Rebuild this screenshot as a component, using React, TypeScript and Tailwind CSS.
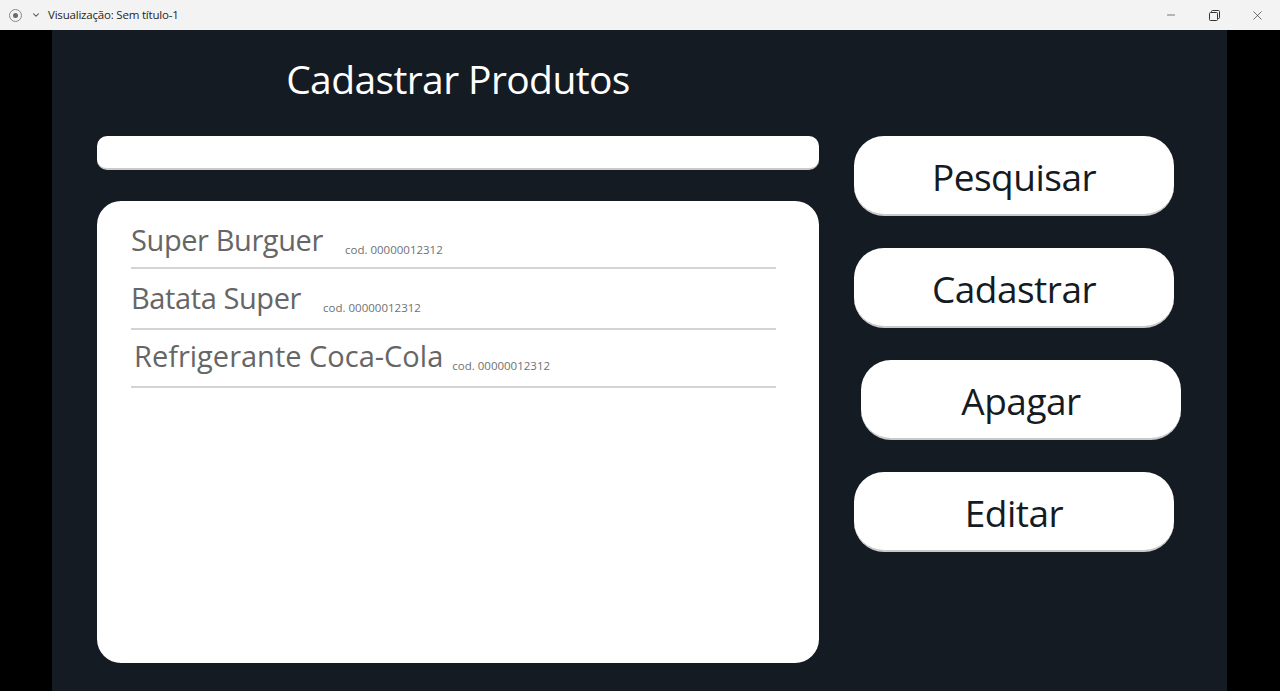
import { Minus, X, ChevronDown } from 'lucide-react';

const produtos = [
  { nome: 'Super Burguer', codigo: '00000012312', box: 'pt-[23px] pb-[11px]', nomeCls: '', gap: 'ml-[22px]' },
  { nome: 'Batata Super', codigo: '00000012312', box: 'pt-[13px] pb-[14px]', nomeCls: '', gap: 'ml-[22px]' },
  { nome: 'Refrigerante Coca-Cola', codigo: '00000012312', box: 'pt-[10px] pb-[14px] pl-[3px]', nomeCls: 'tracking-[0px]', gap: 'ml-[9px]' },
];

const botoes = [
  { label: 'Pesquisar', offset: '' },
  { label: 'Cadastrar', offset: '' },
  { label: 'Apagar', offset: 'translate-x-[7px]' },
  { label: 'Editar', offset: '' },
];

export default function App() {
  return (
    <div className="w-[1280px] h-[691px] flex flex-col overflow-hidden bg-black font-['Open_Sans',sans-serif]">
      {/* Title bar */}
      <div className="h-[30px] shrink-0 bg-[#f3f3f3] flex items-center">
        <div className="ml-[9px] w-[13px] h-[13px] rounded-full border border-[#8a8a8a] flex items-center justify-center">
          <div className="w-[5px] h-[5px] rounded-full bg-[#6a6a6a]" />
        </div>
        <ChevronDown className="ml-[9px] w-[10px] h-[10px] text-[#444]" strokeWidth={2.5} />
        <span className="ml-[7px] text-[11.5px] tracking-[-0.2px] text-[#1f1f1f]">Visualização: Sem título-1</span>
        <div className="ml-auto flex items-center h-full">
          <div className="w-[46px] h-full flex items-center justify-center">
            <Minus className="w-[12px] h-[12px] text-[#333]" strokeWidth={1.3} />
          </div>
          <div className="w-[40px] h-full flex items-center justify-center">
            <svg width="11" height="11" viewBox="0 0 11 11" fill="none" stroke="#333" strokeWidth="1">
              <rect x="0.5" y="2.5" width="8" height="8" rx="1" />
              <path d="M2.5 2.5V1.5a1 1 0 0 1 1-1h6a1 1 0 0 1 1 1v6a1 1 0 0 1-1 1h-1" />
            </svg>
          </div>
          <div className="w-[46px] h-full flex items-center justify-center">
            <X className="w-[15px] h-[15px] text-[#333]" strokeWidth={1.1} />
          </div>
        </div>
      </div>

      {/* App area */}
      <div className="flex-1 flex pl-[52px]">
        <div className="w-[1175px] h-full bg-[#151b23] pl-[45px] pt-[28px]">
          <div className="w-[722px] flex justify-center">
            <h1 className="text-[39px] leading-[41px] text-white tracking-[-0.6px]">Cadastrar Produtos</h1>
          </div>

          <div className="mt-[37px] flex gap-[35px] items-start">
            {/* Left column */}
            <div className="w-[722px] flex flex-col gap-[31px]">
              <input
                type="text"
                className="h-[34px] w-full rounded-[10px] bg-white border-b-2 border-[#c9c9c9] outline-none px-3"
              />
              <div className="h-[462px] w-full rounded-[24px] bg-white pl-[34px] pr-[43px]">
                {produtos.map((p) => (
                  <div key={p.nome} className={`flex items-baseline border-b-2 border-[#d4d4d4] ${p.box}`}>
                    <span className={`text-[29px] leading-[32px] text-[#666] tracking-[-0.4px] ${p.nomeCls}`}>{p.nome}</span>
                    <span className={`text-[11.5px] text-[#707070] translate-y-[3px] ${p.gap}`}>cod. {p.codigo}</span>
                  </div>
                ))}
              </div>
            </div>

            {/* Right column */}
            <div className="flex flex-col gap-[32px]">
              {botoes.map((b) => (
                <button
                  key={b.label}
                  className={`w-[320px] h-[80px] rounded-[30px] bg-white border-b-2 border-[#c9c9c9] flex items-center justify-center pt-[4px] text-[37px] leading-[40px] text-[#151b23] tracking-[-0.5px] ${b.offset}`}
                >
                  {b.label}
                </button>
              ))}
            </div>
          </div>
        </div>
      </div>
    </div>
  );
}
